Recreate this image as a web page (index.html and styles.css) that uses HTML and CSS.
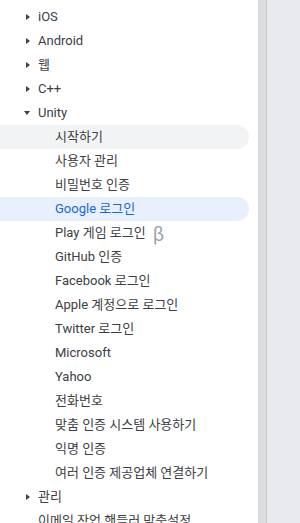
FILE: index.html
```html
<!DOCTYPE html>
<html lang="ko">
<head>
    <meta charset="UTF-8">
    <meta name="viewport" content="width=device-width, initial-scale=1.0">
    <title>Authentication</title>
    <link rel="stylesheet" href="styles.css">
</head>
<body>
    <nav class="toc">
        <ul>
            <li class="item closed"><span class="arrow"></span>iOS</li>
            <li class="item closed"><span class="arrow"></span>Android</li>
            <li class="item closed"><span class="arrow"></span>웹</li>
            <li class="item closed"><span class="arrow"></span>C++</li>
            <li class="item open"><span class="arrow"></span>Unity</li>
            <li class="child hover">시작하기</li>
            <li class="child">사용자 관리</li>
            <li class="child">비밀번호 인증</li>
            <li class="child active">Google 로그인</li>
            <li class="child">Play 게임 로그인 <span class="beta">β</span></li>
            <li class="child">GitHub 인증</li>
            <li class="child">Facebook 로그인</li>
            <li class="child">Apple 계정으로 로그인</li>
            <li class="child">Twitter 로그인</li>
            <li class="child">Microsoft</li>
            <li class="child">Yahoo</li>
            <li class="child">전화번호</li>
            <li class="child">맞춤 인증 시스템 사용하기</li>
            <li class="child">익명 인증</li>
            <li class="child">여러 인증 제공업체 연결하기</li>
            <li class="item closed"><span class="arrow"></span>관리</li>
            <li class="item plain">이메일 작업 핸들러 맞춤설정</li>
        </ul>
    </nav>
    <div class="strip"></div>
    <div class="pane"></div>
</body>
</html>
```

FILE: styles.css
```css
body {
    margin: 0;
    padding: 0;
    display: flex;
    height: 523px;
    overflow: hidden;
    font-family: Roboto, "Noto Sans CJK KR", sans-serif;
    font-size: 13px;
    color: #3c4043;
    background-color: #fff;
}
.toc {
    width: 258px;
    flex-shrink: 0;
}
.toc ul {
    list-style: none;
    margin: 0;
    padding: 5px 0 0;
}
.toc li {
    height: 24px;
    line-height: 24px;
    margin-right: 9px;
    white-space: nowrap;
    display: flex;
    align-items: center;
}
.item {
    padding-left: 24px;
}
.item.plain {
    padding-left: 38px;
}
.child {
    padding-left: 55px;
}
.arrow {
    width: 14px;
    height: 24px;
    position: relative;
    flex-shrink: 0;
}
.closed .arrow::before {
    content: "";
    position: absolute;
    left: 2px;
    top: 8.5px;
    border-top: 3.5px solid transparent;
    border-bottom: 3.5px solid transparent;
    border-left: 4px solid #3c4043;
}
.open .arrow::before {
    content: "";
    position: absolute;
    left: 0;
    top: 10px;
    border-left: 3.5px solid transparent;
    border-right: 3.5px solid transparent;
    border-top: 4px solid #3c4043;
}
.hover {
    background-color: #f1f3f4;
    border-radius: 0 12px 12px 0;
}
.active {
    background-color: #e8f0fe;
    color: #1967d2;
    border-radius: 0 12px 12px 0;
}
.beta {
    font-family: "Noto Sans CJK KR", sans-serif;
    font-size: 18px;
    color: #9aa0a6;
    margin-left: 7px;
}
.strip {
    width: 8px;
    flex-shrink: 0;
    background-color: #dadce0;
    border-right: 1px solid #c8cacd;
}
.pane {
    flex: 1;
    background-color: #e8eaed;
}
```
